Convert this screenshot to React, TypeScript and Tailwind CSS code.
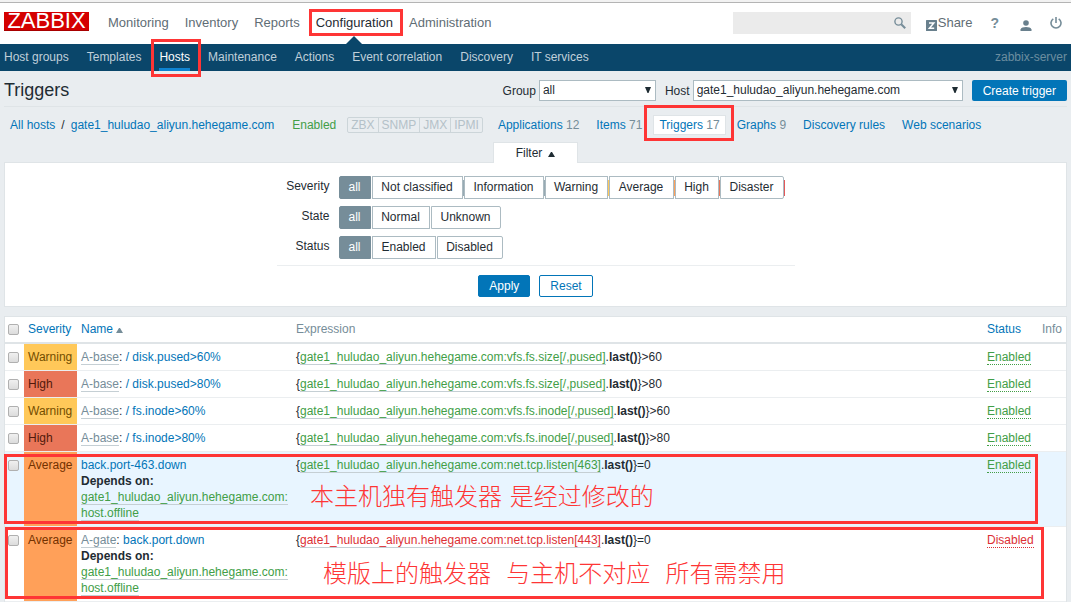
import { Fragment, type ReactNode } from 'react';

const mainMenu = ['Monitoring', 'Inventory', 'Reports', 'Configuration', 'Administration'];
const subMenu = ['Host groups', 'Templates', 'Hosts', 'Maintenance', 'Actions', 'Event correlation', 'Discovery', 'IT services'];

function Mark({ className }: { className: string }) {
  return <span aria-hidden="true" className={`pointer-events-none absolute z-10 border-3 border-[#fe3535] ${className}`} />;
}

function TopBar() {
  return (
    <header className="flex h-[41px] items-start justify-between bg-white pl-1 pr-[9px] text-[13px] leading-5">
      <div className="flex">
        <a href="#" className="mt-[9px] flex h-[19px] w-[85px] items-center justify-center border-b border-[#a80000] bg-[#d40000] text-[22px] leading-[18px] text-white">
          ZABBIX
        </a>
        <nav className="ml-[19px] mt-[10px] flex gap-4">
          {mainMenu.map((item) => (
            <a key={item} href="#" className={item === 'Configuration' ? 'relative text-[#1f2c33]' : 'text-[#5f6d75]'}>
              {item}
              {item === 'Configuration' && (
                <>
                  <Mark className="-left-[7px] -top-1 h-[27px] w-[94px]" />
                  <svg aria-hidden="true" viewBox="0 0 16 8" className="absolute left-[30px] top-[23px] h-2 w-4">
                    <path d="M0 8L8 0l8 8z" fill="#0a466a" />
                  </svg>
                </>
              )}
            </a>
          ))}
        </nav>
      </div>
      <div className="mt-[9px] flex items-start text-[#5f6d75]">
        <div className="flex h-[22px] w-[178px] items-center bg-[#ebebeb] pr-[5px]">
          <input type="text" aria-label="Search" className="h-full min-w-0 flex-1 bg-transparent px-1 text-xs outline-none" />
          <button type="button" aria-label="Run search">
            <svg viewBox="0 0 12 12" className="h-3 w-3" fill="none" stroke="#768d99">
              <circle cx="4.5" cy="4.5" r="3.6" strokeWidth="1.4" />
              <path d="M7.2 7.2l4 4" strokeWidth="2" />
            </svg>
          </button>
        </div>
        <a href="#" className="ml-[15px] mt-px flex">
          <svg aria-hidden="true" viewBox="0 0 11 11" className="mt-[7px] h-[11px] w-[11px]">
            <rect width="11" height="11" rx="0.5" fill="#69808d" />
            <path d="M3 3h4.800L3.400 8.300h4.800" fill="none" stroke="#fff" strokeWidth="1.500" />
          </svg>
          <span className="ml-px">Share</span>
        </a>
        <a href="#" aria-label="Help" className="ml-[18px] mt-px text-[14px] font-bold text-[#768d99]">?</a>
        <a href="#" aria-label="Profile" className="ml-[21px] mt-2">
          <svg viewBox="0 0 12 12" className="h-3 w-3" fill="#69808d">
            <circle cx="6" cy="3" r="2.800" />
            <path d="M0.500 11V9.400C1 7.800 3.500 7 6 7s5 .8 5.500 2.400V11z" />
          </svg>
        </a>
        <a href="#" aria-label="Sign out" className="ml-[18px] mt-[5px]">
          <svg viewBox="0 0 12 12" className="h-3 w-3" fill="none" stroke="#768d99" strokeWidth="1.600">
            <path d="M3.300 1.800a5 5 0 1 0 5.400 0M6 0v6" />
          </svg>
        </a>
      </div>
    </header>
  );
}

function SubBar() {
  return (
    <div className="flex h-[27px] justify-between bg-[#0a466a] px-1 leading-[26px] text-[#c0d0da]">
      <nav className="flex gap-[18px]">
        {subMenu.map((item) => (
          <a key={item} href="#" className={item === 'Hosts' ? 'relative border-b-3 border-[#0f84d1] text-white' : ''}>
            {item}
            {item === 'Hosts' && <Mark className="-left-2 -top-[5px] h-[38px] w-[50px]" />}
          </a>
        ))}
      </nav>
      <span className="text-[#6c8ea0]">zabbix-server</span>
    </div>
  );
}

function Picker({ id, label, value, className }: { id: string; label: string; value: string; className: string }) {
  return (
    <div className="flex items-center gap-[3px]">
      <label htmlFor={id}>{label}</label>
      <div className={`relative ${className}`}>
        <select id={id} className="h-[21px] w-full appearance-none border border-[#acbbc2] bg-white pl-[3px] leading-[17px]">
          <option>{value}</option>
        </select>
        <svg aria-hidden="true" viewBox="0 0 6 6" className="pointer-events-none absolute right-[5px] top-[7px] h-[6px] w-[6px]">
          <path d="M0 0h6L3.500 6h-1z" fill="#1f2c33" />
        </svg>
      </div>
    </div>
  );
}

function TitleBar() {
  return (
    <div className="flex h-9 items-start justify-between border-b border-[#dfe4e7] pt-[9px]">
      <h1 className="text-[18px] leading-5">Triggers</h1>
      <form className="flex items-center gap-[9px]">
        <Picker id="group" label="Group" value="all" className="w-[117px]" />
        <Picker id="host" label="Host" value="gate1_huludao_aliyun.hehegame.com" className="w-[270px]" />
        <button type="button" className="h-[21px] rounded-xs bg-[#0275b8] px-[11px] text-white">Create trigger</button>
      </form>
    </div>
  );
}

function Counted({ label, count }: { label: string; count: number }) {
  return (
    <a href="#" className="text-[#0275b8]">
      {label} <span className="text-[#768d99]">{count}</span>
    </a>
  );
}

function HostBar() {
  return (
    <div className="flex h-[35px] items-center pl-[6px]">
      <a href="#" className="text-[#0275b8]">All hosts</a>
      <span className="mx-[6px]">/</span>
      <a href="#" className="text-[#0275b8]">gate1_huludao_aliyun.hehegame.com</a>
      <span className="ml-[18px] text-[#429e47]">Enabled</span>
      <span className="ml-[11px] flex rounded-xs border border-[#ccd5d9] leading-[14px] text-[#b4c1c8]">
        {['ZBX', 'SNMP', 'JMX', 'IPMI'].map((t) => (
          <span key={t} className="border-r border-[#ccd5d9] px-[3px] last:border-r-0">{t}</span>
        ))}
      </span>
      <div className="ml-[15px] flex items-center gap-[17px]">
        <Counted label="Applications" count={12} />
        <Counted label="Items" count={71} />
      </div>
      <div className="relative mx-[11px] border border-[#dfe4e7] bg-white px-[5px] leading-[18px]">
        <Counted label="Triggers" count={17} />
        <Mark className="-left-[10px] -top-[11px] h-9 w-[90px]" />
      </div>
      <div className="flex items-center gap-[17px]">
        <Counted label="Graphs" count={9} />
        <a href="#" className="text-[#0275b8]">Discovery rules</a>
        <a href="#" className="text-[#0275b8]">Web scenarios</a>
      </div>
    </div>
  );
}

type Option = { label: string; width: string; strip?: string };

const severities: Option[] = [
  { label: 'all', width: 'w-8' },
  { label: 'Not classified', width: 'w-[91px]', strip: 'bg-[#97aab3]' },
  { label: 'Information', width: 'w-[80px]', strip: 'bg-[#97aab3]' },
  { label: 'Warning', width: 'w-[63px]', strip: 'bg-[#ffc859]' },
  { label: 'Average', width: 'w-[65px]', strip: 'bg-[#ffa059]' },
  { label: 'High', width: 'w-[44px]', strip: 'bg-[#e97659]' },
  { label: 'Disaster', width: 'w-[64px]', strip: 'bg-[#e45959]' },
];

const states: Option[] = [
  { label: 'all', width: 'w-8' },
  { label: 'Normal', width: 'w-[58px]' },
  { label: 'Unknown', width: 'w-[70px]' },
];

const statuses: Option[] = [
  { label: 'all', width: 'w-8' },
  { label: 'Enabled', width: 'w-[64px]' },
  { label: 'Disabled', width: 'w-[66px]' },
];

function RadioRow({ name, title, options }: { name: string; title: string; options: Option[] }) {
  return (
    <div role="radiogroup" aria-labelledby={`${name}-title`} className="flex">
      <span id={`${name}-title`} className="mr-[9px] w-[53px] text-right leading-5">{title}</span>
      <div className="relative flex items-center">
        {options.map((o, i) => (
          <Fragment key={o.label}>
            <input type="radio" name={name} id={`${name}-${i}`} defaultChecked={i === 0} className="sr-only" />
            <label
              htmlFor={`${name}-${i}`}
              className={`h-[23px] whitespace-nowrap border text-center leading-5 ${o.width} ${
                i === 0 ? 'rounded-l-xs border-[#768d99] bg-[#768d99] text-white' : 'border-[#acbbc2] bg-white last-of-type:rounded-r-xs'
              }`}
            >
              {o.label}
            </label>
            <span className={`h-4 w-px ${o.strip ?? ''}`} />
          </Fragment>
        ))}
      </div>
    </div>
  );
}

function FilterPanel() {
  return (
    <section>
      <div className="flex justify-center">
        <button type="button" className="relative -mb-px flex h-[21px] w-[85px] items-center justify-center gap-[6px] border border-b-0 border-[#dfe4e7] bg-white">
          Filter
          <svg aria-hidden="true" viewBox="0 0 7 5" className="mt-[3px] h-[5px] w-[7px]">
            <path d="M0 5l3-5h1l3 5z" fill="#1f2c33" />
          </svg>
        </button>
      </div>
      <form className="flex flex-col items-center border border-[#dfe4e7] bg-white pb-[9px] pt-[13px]">
        <div className="flex w-[518px] flex-col gap-[7px] border-b border-[#ebeef0] pb-[6px]">
          <RadioRow name="severity" title="Severity" options={severities} />
          <RadioRow name="state" title="State" options={states} />
          <RadioRow name="status" title="Status" options={statuses} />
        </div>
        <div className="mt-[9px] flex gap-[9px]">
          <button type="button" className="h-[22px] rounded-xs border border-[#0275b8] bg-[#0275b8] px-[10px] leading-5 text-white">Apply</button>
          <button type="button" className="h-[22px] rounded-xs border border-[#0275b8] bg-white px-[10px] leading-5 text-[#0275b8]">Reset</button>
        </div>
      </form>
    </section>
  );
}

type Row = {
  severity: 'Warning' | 'High' | 'Average';
  template?: string;
  name: string;
  item: string;
  tail: string;
  enabled: boolean;
  depends?: boolean;
  highlight?: boolean;
  note?: ReactNode;
};

const rows: Row[] = [
  { severity: 'Warning', template: 'A-base', name: '/ disk.pused>60%', item: 'vfs.fs.size[/,pused]', tail: '>60', enabled: true },
  { severity: 'High', template: 'A-base', name: '/ disk.pused>80%', item: 'vfs.fs.size[/,pused]', tail: '>80', enabled: true },
  { severity: 'Warning', template: 'A-base', name: '/ fs.inode>60%', item: 'vfs.fs.inode[/,pused]', tail: '>60', enabled: true },
  { severity: 'High', template: 'A-base', name: '/ fs.inode>80%', item: 'vfs.fs.inode[/,pused]', tail: '>80', enabled: true },
  {
    severity: 'Average', name: 'back.port-463.down', item: 'net.tcp.listen[463]', tail: '=0', enabled: true, depends: true, highlight: true,
    note: (
      <>
        <Mark className="-left-px right-[28px] top-[2px] h-[70px]" />
        <Note className="left-[305px] top-[29px]">本主机独有触发器 是经过修改的</Note>
      </>
    ),
  },
  {
    severity: 'Average', template: 'A-gate', name: 'back.port.down', item: 'net.tcp.listen[443]', tail: '=0', enabled: false, depends: true,
    note: (
      <>
        <Mark className="left-0 right-[22px] top-0 h-[72px]" />
        <Note className="left-[318px] top-[31px]">模版上的触发器  与主机不对应  所有需禁用</Note>
      </>
    ),
  },
];

function Note({ className, children }: { className: string; children: ReactNode }) {
  return (
    <span className={`absolute z-10 whitespace-pre font-['DejaVu_Sans','Noto_Sans_CJK_SC',sans-serif] text-[24px] font-light leading-8 text-[#fe3535] ${className}`}>
      {children}
    </span>
  );
}

const severityStyle = {
  Warning: 'bg-[#ffc859] text-[#734d00]',
  High: 'bg-[#e97659] text-[#52190b]',
  Average: 'bg-[#ffa059] text-[#733100]',
};

const box = 'block h-[11px] w-[11px] appearance-none rounded-xs border border-[#b0b0b0] bg-linear-to-b from-[#f0f0f0] to-[#dcdcdc] checked:bg-[#0275b8]';

function TriggerTable() {
  return (
    <table className="mt-[9px] w-full table-fixed border-separate border-spacing-0 border border-[#dfe4e7] bg-white text-left">
      <colgroup>
        <col className="w-[19px]" />
        <col className="w-[53px]" />
        <col className="w-[215px]" />
        <col />
        <col className="w-[55px]" />
        <col className="w-[28px]" />
      </colgroup>
      <thead>
        <tr className="[&>th]:border-b-2 [&>th]:border-[#dfe4e7] [&>th]:px-1 [&>th]:pb-[5px] [&>th]:pt-1 [&>th]:font-normal [&>th]:leading-4">
          <th className="!px-[3px]"><input type="checkbox" aria-label="Select all triggers" className={box} /></th>
          <th><a href="#" className="text-[#0275b8]">Severity</a></th>
          <th>
            <a href="#" className="text-[#0275b8]">
              Name
              <svg aria-hidden="true" viewBox="0 0 7 5" className="ml-[3px] inline h-[5px] w-[7px] align-baseline">
                <path d="M0 5l3-5h1l3 5z" fill="#768d99" />
              </svg>
            </a>
          </th>
          <th className="text-[#768d99]">Expression</th>
          <th><a href="#" className="text-[#0275b8]">Status</a></th>
          <th className="text-[#768d99]">Info</th>
        </tr>
      </thead>
      <tbody>
        {rows.map((r) => (
          <tr
            key={r.name}
            className={`relative [&>td]:border-b [&>td]:border-[#ebeef0] [&>td]:px-1 [&>td]:py-[5px] [&>td]:align-top [&>td]:leading-4 ${r.highlight ? 'bg-[#e8f5ff]' : ''}`}
          >
            <td className="!px-[3px] !pt-2">
              <input type="checkbox" aria-label={`Select ${r.name}`} className={box} />
              {r.note}
            </td>
            <td className={severityStyle[r.severity]}>{r.severity}</td>
            <td>
              {r.template && (
                <>
                  <a href="#" className="border-b border-[#c5cfd4] text-[#768d99]">{r.template}</a>
                  {': '}
                </>
              )}
              <a href="#" className="text-[#0275b8]">{r.name}</a>
              {r.depends && (
                <>
                  <br />
                  <b>Depends on:</b>
                  <br />
                  <a href="#" className="border-b border-[#c5cfd4] text-[#429e47]">gate1_huludao_aliyun.hehegame.com: host.offline</a>
                </>
              )}
            </td>
            <td>
              {'{'}
              <a href="#" className={`border-b border-[#c5cfd4] ${r.enabled ? 'text-[#429e47]' : 'text-[#dc2f35]'}`}>
                gate1_huludao_aliyun.hehegame.com:{r.item}
              </a>
              .<b>last()</b>
              {'}'}
              {r.tail}
            </td>
            <td>
              <a href="#" className={`border-b border-dotted ${r.enabled ? 'border-[#429e47] text-[#429e47]' : 'border-[#dc2f35] text-[#dc2f35]'}`}>
                {r.enabled ? 'Enabled' : 'Disabled'}
              </a>
            </td>
            <td />
          </tr>
        ))}
      </tbody>
    </table>
  );
}

export default function App() {
  return (
    <div className="min-h-screen overflow-x-hidden bg-[#e9edf0] font-['Liberation_Sans',Arial,sans-serif] text-xs text-[#1f2c33]">
      <div className="h-[3px] border-b border-[#b4b4b4] bg-[#f2f2f2]" />
      <TopBar />
      <SubBar />
      <main className="px-1">
        <TitleBar />
        <HostBar />
        <FilterPanel />
        <TriggerTable />
      </main>
    </div>
  );
}
